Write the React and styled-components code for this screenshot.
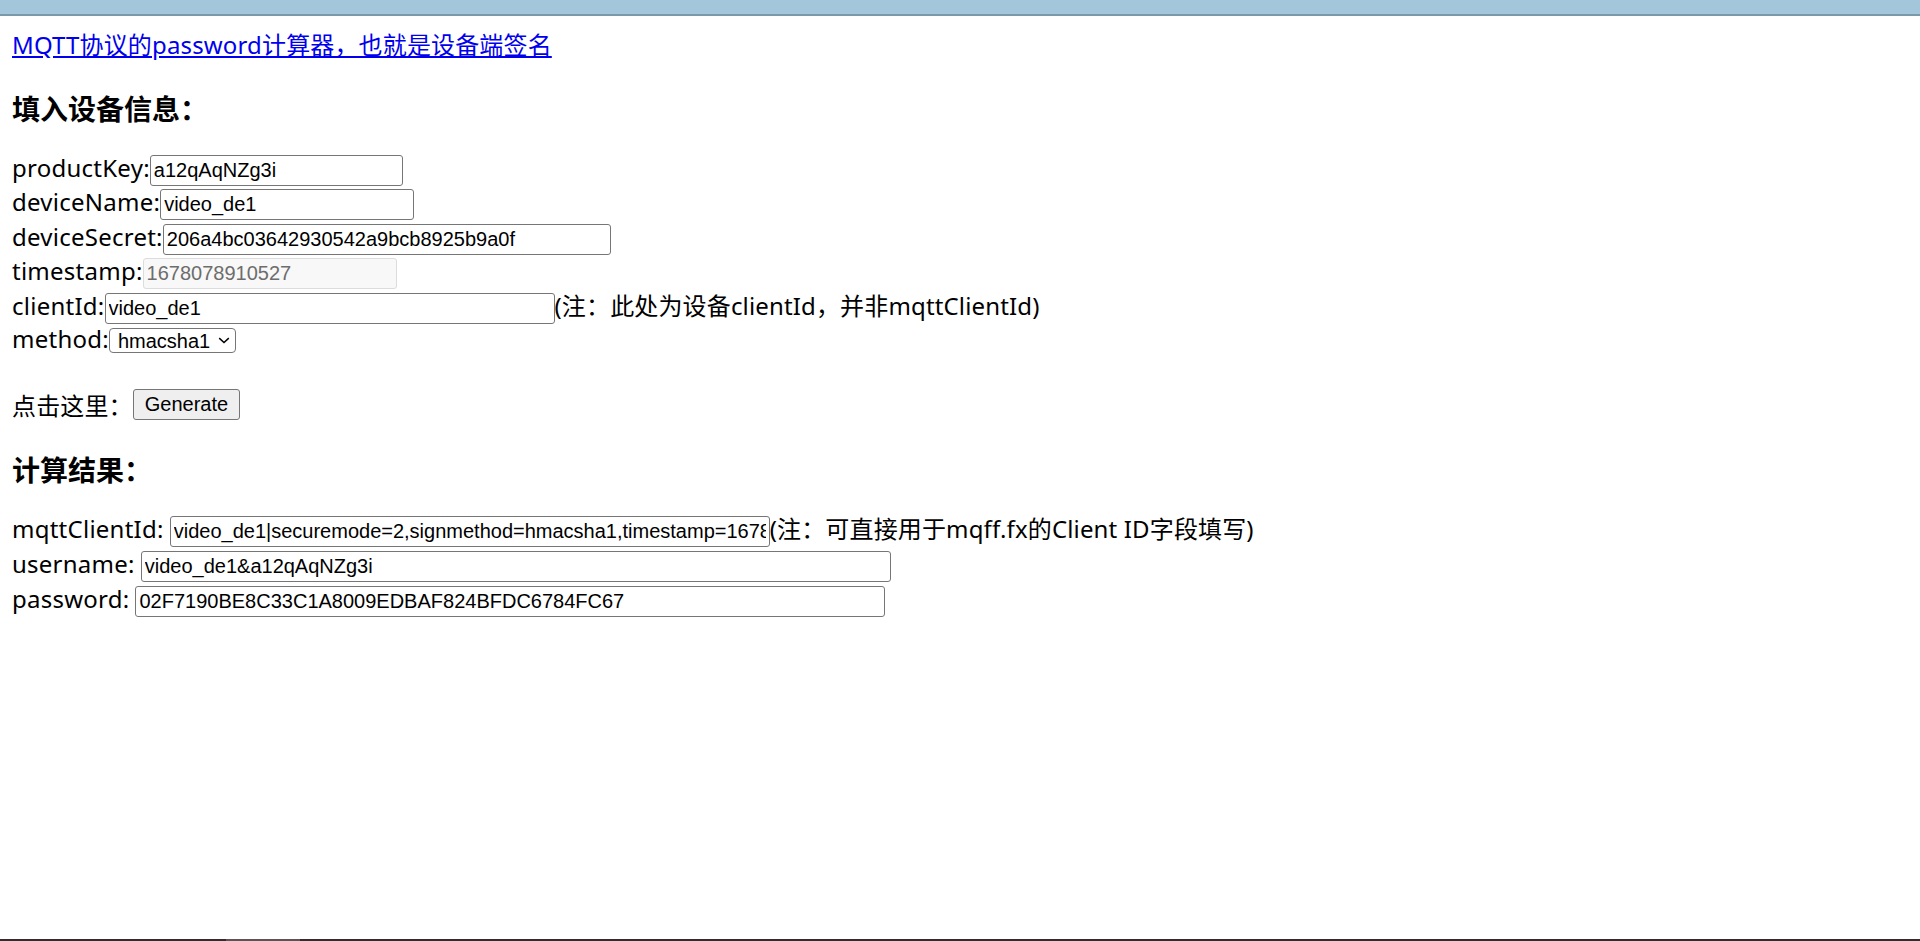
import React from "react";
import styled, { createGlobalStyle } from "styled-components";

const GlobalStyle = createGlobalStyle`
  html, body {
    margin: 0;
    padding: 0;
    background: #ffffff;
  }
  body {
    font-family: "Noto Sans", "Noto Sans CJK SC", sans-serif;
    font-size: 24px;
    color: #000000;
  }
`;

const Screen = styled.div`
  min-height: 100vh;
  display: flex;
  flex-direction: column;
`;

const TopBar = styled.div`
  height: 14px;
  background: #a4c6da;
  border-bottom: 2px solid #7a9aaa;
  flex: none;
`;

const Content = styled.main`
  flex: 1;
  padding: 12px;
  letter-spacing: 0.15px;
`;

const TitleLink = styled.a`
  display: block;
  width: fit-content;
  height: 34px;
  line-height: 34px;
  color: #0000ee;
  text-decoration: underline;
  text-underline-offset: 2px;
`;

const Heading = styled.h3`
  margin: 28px 0;
  font-size: 28px;
  line-height: 37px;
  font-weight: 700;
  letter-spacing: 0;
  font-family: "Noto Sans CJK SC", "Noto Sans", sans-serif;
`;

const Fields = styled.div`
  display: flex;
  flex-direction: column;
`;

const Row = styled.div`
  display: flex;
  align-items: baseline;
  height: ${(p) => p.$h || 34.4}px;
  white-space: nowrap;
`;

const Label = styled.span`
  line-height: 24px;
  letter-spacing: 0.25px;
  margin-right: ${(p) => (p.$space ? "6px" : "0")};
`;

const Note = styled.span`
  line-height: 24px;
`;

const TextInput = styled.input`
  box-sizing: border-box;
  width: ${(p) => p.$w}px;
  height: 31px;
  margin: 0;
  padding: 1px 3px;
  border: 1px solid ${(p) => (p.disabled ? "#dcdcdc" : "#767676")};
  border-radius: 3px;
  background: ${(p) => (p.disabled ? "#f8f8f8" : "#ffffff")};
  color: ${(p) => (p.disabled ? "#6d6d6d" : "#000000")};
  font-family: "Liberation Sans", Arial, sans-serif;
  font-size: 20px;
  letter-spacing: 0;
  outline: none;
`;

const SelectBox = styled.span`
  display: inline-flex;
  align-items: center;
  box-sizing: border-box;
  width: 127px;
  height: 25px;
  padding: 0 5px 0 8px;
  gap: 8px;
  border: 1px solid #767676;
  border-radius: 4px;
  background: #ffffff;
  font-family: "Liberation Sans", Arial, sans-serif;
  font-size: 20px;
  letter-spacing: 0;
`;

const NativeSelect = styled.select`
  appearance: none;
  -webkit-appearance: none;
  width: 92px;
  border: none;
  background: transparent;
  padding: 0;
  margin: 0;
  font: inherit;
  color: #000000;
  outline: none;
`;

const ActionRow = styled.p`
  margin: 24px 0 0;
  height: 38px;
  display: flex;
  align-items: center;
  padding-top: 1px;
  box-sizing: border-box;
`;

const Button = styled.button`
  box-sizing: border-box;
  height: 31px;
  padding: 1px 11px;
  border: 1px solid #767676;
  border-radius: 3px;
  background: #efefef;
  color: #000000;
  font-family: "Liberation Sans", Arial, sans-serif;
  font-size: 20px;
  letter-spacing: 0;
`;

const Footer = styled.div`
  flex: none;
  height: 2px;
  display: flex;
  background: #2e2e2e;
`;

const FooterGap = styled.div`
  width: ${(p) => p.$w}px;
  background: ${(p) => (p.$thumb ? "#565656" : "transparent")};
`;

function Chevron() {
  return (
    <svg width="15" height="9" viewBox="0 0 15 9" aria-hidden="true">
      <path d="M1.5 1.5 L7.5 7 L13.5 1.5" fill="none" stroke="#000" strokeWidth="1.8" />
    </svg>
  );
}

export default function App() {
  return (
    <>
      <GlobalStyle />
      <Screen>
        <TopBar />
        <Content>
          <TitleLink href="#">MQTT协议的password计算器，也就是设备端签名</TitleLink>
          <Heading>填入设备信息：</Heading>
          <Fields>
            <Row>
              <Label>productKey:</Label>
              <TextInput $w={253} value="a12qAqNZg3i" readOnly />
            </Row>
            <Row>
              <Label>deviceName:</Label>
              <TextInput $w={254} value="video_de1" readOnly />
            </Row>
            <Row>
              <Label>deviceSecret:</Label>
              <TextInput $w={448} value="206a4bc03642930542a9bcb8925b9a0f" readOnly />
            </Row>
            <Row>
              <Label>timestamp:</Label>
              <TextInput $w={254} value="1678078910527" disabled readOnly />
            </Row>
            <Row>
              <Label>clientId:</Label>
              <TextInput $w={450} value="video_de1" readOnly />
              <Note>(注：此处为设备clientId，并非mqttClientId)</Note>
            </Row>
            <Row>
              <Label>method:</Label>
              <SelectBox>
                <NativeSelect defaultValue="hmacsha1">
                  <option value="hmacsha1">hmacsha1</option>
                  <option value="hmacmd5">hmacmd5</option>
                </NativeSelect>
                <Chevron />
              </SelectBox>
            </Row>
          </Fields>
          <ActionRow>
            点击这里：<Button type="button">Generate</Button>
          </ActionRow>
          <Heading>计算结果：</Heading>
          <Fields>
            <Row $h={35}>
              <Label $space>mqttClientId:</Label>
              <TextInput
                $w={600}
                value="video_de1|securemode=2,signmethod=hmacsha1,timestamp=1678078910527|"
                readOnly
              />
              <Note>(注：可直接用于mqff.fx的Client ID字段填写)</Note>
            </Row>
            <Row $h={35}>
              <Label $space>username:</Label>
              <TextInput $w={750} value="video_de1&a12qAqNZg3i" readOnly />
            </Row>
            <Row $h={35}>
              <Label $space>password:</Label>
              <TextInput $w={750} value="02F7190BE8C33C1A8009EDBAF824BFDC6784FC67" readOnly />
            </Row>
          </Fields>
        </Content>
        <Footer>
          <FooterGap $w={226} />
          <FooterGap $w={74} $thumb />
        </Footer>
      </Screen>
    </>
  );
}
